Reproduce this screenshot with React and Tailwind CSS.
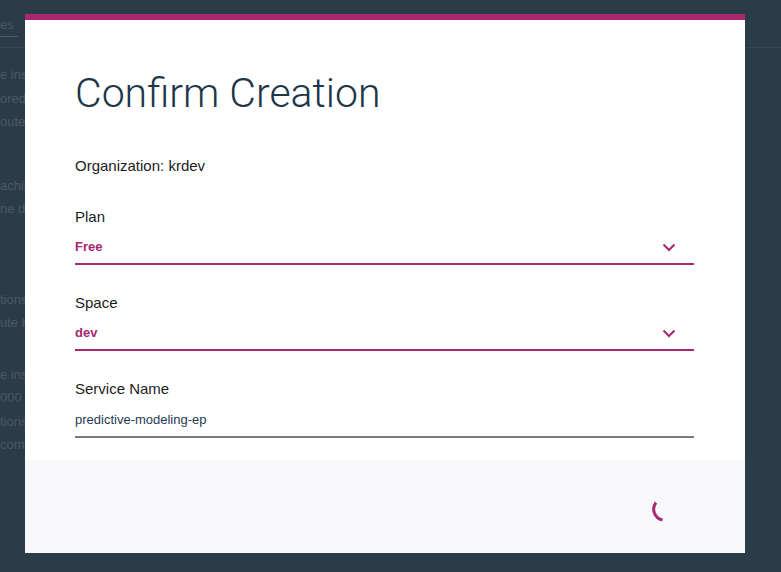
import React from "react";

const MAGENTA = "#a8276f";

function Chevron() {
  return (
    <svg width="14" height="9" viewBox="0 0 14 9" fill="none" className="shrink-0">
      <path d="M1.5 1.5 L7 7 L12.5 1.5" stroke={MAGENTA} strokeWidth="2" />
    </svg>
  );
}

function SelectField({ label, value, className }) {
  return (
    <div className={className}>
      <div className="text-[15px] leading-[20px] text-[#1c1c1c]">{label}</div>
      <div className="mt-[10px] flex items-center justify-between border-b-2 border-[#a8276f] pb-[6px] pr-[18px]">
        <span className="text-[13px] leading-[20px] font-bold text-[#a8276f]">{value}</span>
        <Chevron />
      </div>
    </div>
  );
}

function BackgroundPage() {
  const lines = [
    ["e ins", "mt-[15px]"],
    ["ored", ""],
    ["oute", ""],
    ["achin", "mt-[40px]"],
    ["ne d", ""],
    ["tions", "mt-[67px]"],
    ["ute h", ""],
    ["e ins", "mt-[28px]"],
    ["000", ""],
    ["tions", ""],
    ["com", ""],
  ];
  return (
    <div className="h-full w-full overflow-hidden">
      <div className="flex h-[48px] items-start border-b border-[#33475a]">
        <div className="mt-[17px] border-b border-[#4a5d6b] pb-[3px] pr-[4px] text-[13px] leading-[16px] text-[#485a67]">
          es
        </div>
      </div>
      <div className="text-[13px] leading-[23.5px] text-[#485a67]">
        {lines.map(([t, c], i) => (
          <div key={i} className={c}>
            {t}
          </div>
        ))}
      </div>
    </div>
  );
}

export default function App() {
  return (
    <div
      className="relative h-[572px] w-[781px] overflow-hidden bg-[#2b3c49]"
      style={{ fontFamily: '"Liberation Sans", Arial, sans-serif' }}
    >
      <BackgroundPage />

      <div className="absolute left-[25px] top-[14px] flex h-[539px] w-[720px] flex-col border-t-[6px] border-[#a8276f] bg-white">
        <div className="pl-[50px] pr-[51px]">
          <h1
            className="mt-[49px] text-[41px] leading-[48px] font-light text-[#1d3649]"
            style={{ fontFamily: "Roboto, sans-serif" }}
          >
            Confirm Creation
          </h1>

          <div className="mt-[39px] text-[15px] leading-[20px] text-[#1c1c1c]">
            Organization: krdev
          </div>

          <SelectField className="mt-[31px]" label="Plan" value="Free" />
          <SelectField className="mt-[28px]" label="Space" value="dev" />

          <div className="mt-[28px]">
            <div className="text-[15px] leading-[20px] text-[#1c1c1c]">Service Name</div>
            <div className="mt-[8px] border-b-2 border-[#7a7a7a] pb-[5px]">
              <span className="text-[13px] leading-[20px] text-[#1f3a50]">
                predictive-modeling-ep
              </span>
            </div>
          </div>
        </div>

        <div className="mt-[22px] flex flex-1 items-center justify-end bg-[#f8f8fa] pr-[69px]">
          <svg width="24" height="24" viewBox="0 0 24 24" className="mt-[12px]">
            <path
              d="M4 1.5 A11 11 0 0 0 10.5 19"
              fill="none"
              stroke={MAGENTA}
              strokeWidth="3"
              strokeLinecap="butt"
            />
          </svg>
        </div>
      </div>
    </div>
  );
}
